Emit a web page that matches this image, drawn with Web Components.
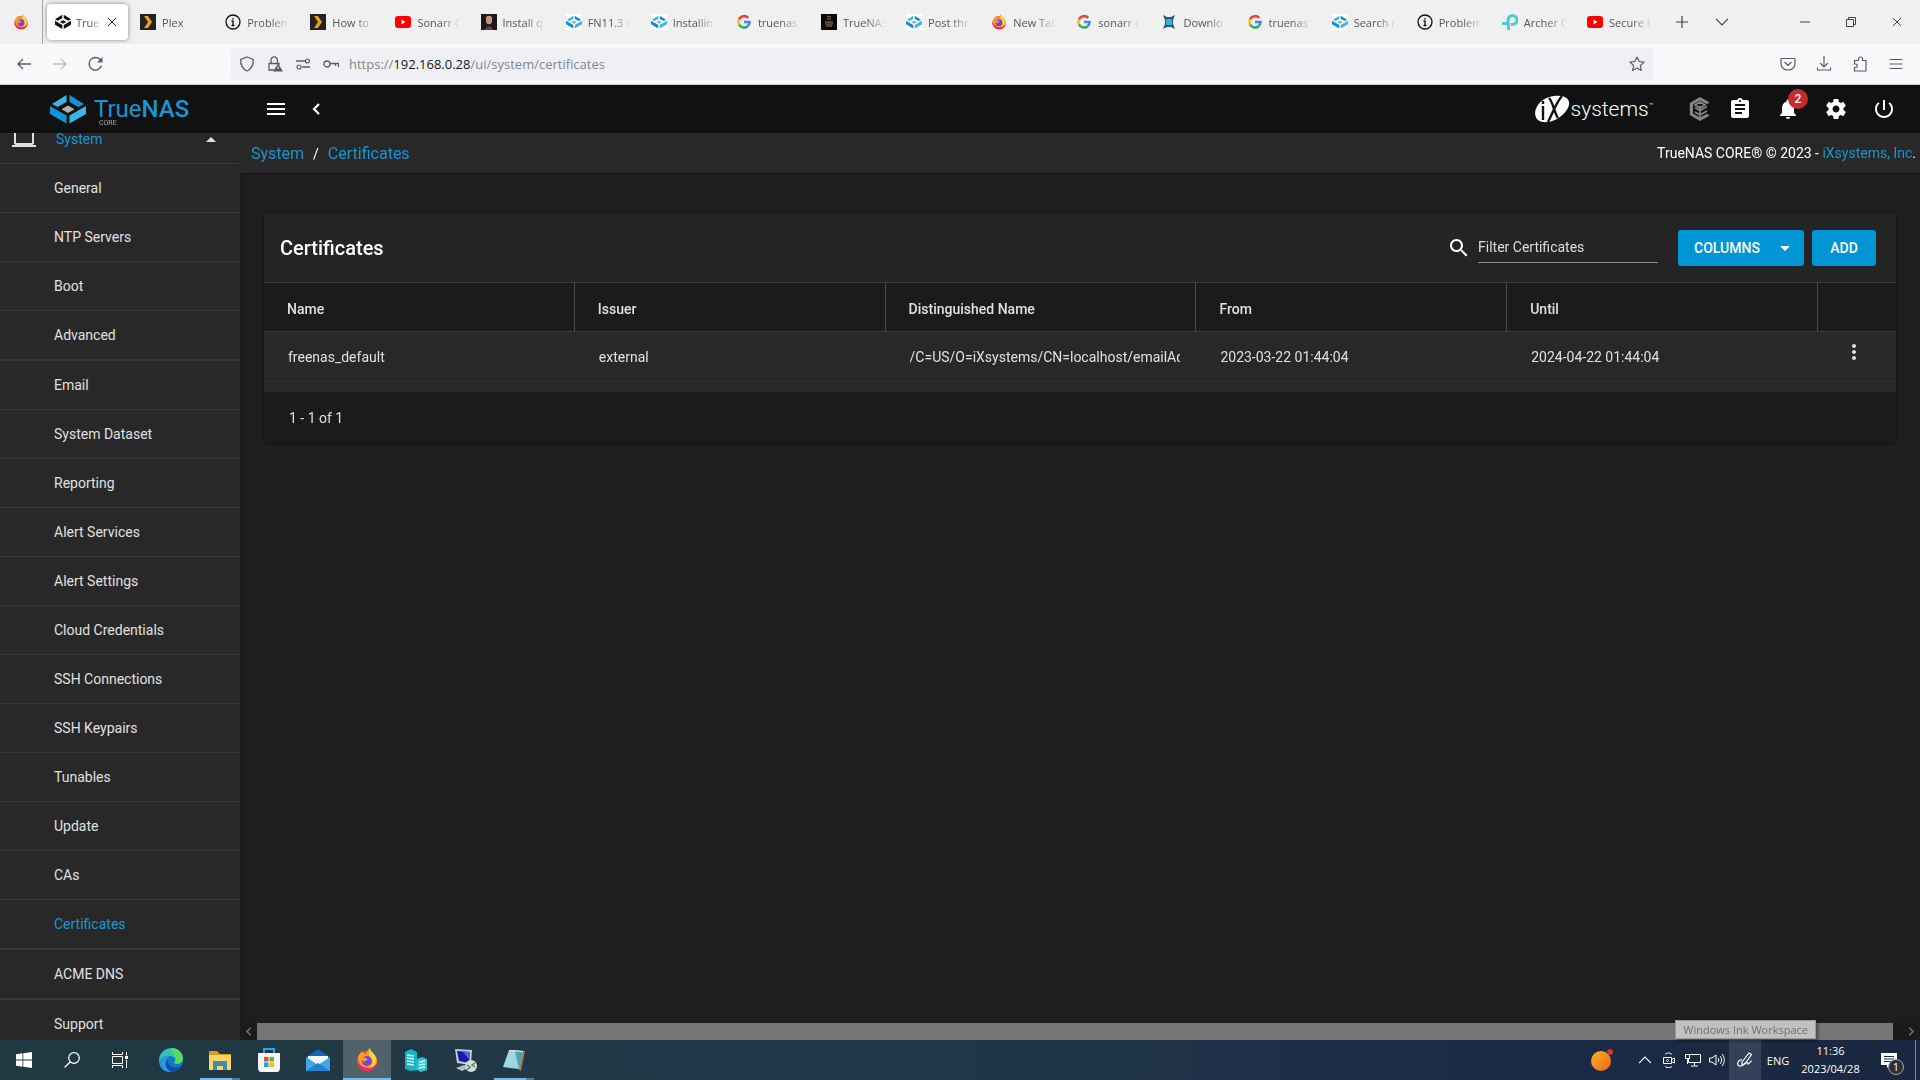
<!DOCTYPE html>
<html lang="en">
<head>
<meta charset="utf-8">
<title>TrueNAS - 192.168.0.28</title>
<style>
  html, body {
    height: 100%;
    margin: 0;
  }
  body {
    display: flex;
    flex-direction: column;
    overflow: hidden;
    background: #1e1e1e;
    font-family: Roboto, "Liberation Sans", sans-serif;
    font-size: 14px;
    --primary: #1a95d0;
    --ui-font: "Open Sans", "Noto Sans", sans-serif;
  }
  .layout {
    display: flex;
    flex: 1;
    min-height: 0;
  }
  main {
    display: flex;
    flex-direction: column;
    flex: 1;
    min-width: 0;
  }
  .content {
    flex: 1;
    padding: 40px 24px 0;
  }
</style>
</head>
<body>
<tab-strip></tab-strip>
<nav-toolbar></nav-toolbar>
<nas-header></nas-header>
<div class="layout">
  <nas-sidebar></nas-sidebar>
  <main>
    <nas-breadcrumb></nas-breadcrumb>
    <div class="content">
      <nas-card>
        <span slot="title">Certificates</span>
        <cert-tools slot="tools"></cert-tools>
        <cert-table></cert-table>
        <span slot="footer">1 - 1 of 1</span>
      </nas-card>
    </div>
    <h-scrollbar></h-scrollbar>
  </main>
</div>
<task-bar></task-bar>

<script>
// icons: [viewBox, markup]
const FOX = `<circle cx="12" cy="13" r="10" fill="#ff5a36"/><path d="M3 9C4 6 6 5 7 3c1 2 2 3 4 3 1-2 2-4 4-6 0 3 1 4 3 6 3 2 5 6 4 10-3 5-14 6-18-1z" fill="#ff9a1f"/><path d="M15 0c0 4 6 5 6 12 0 5-4 9-9 9 4-1 6-4 5-8-1-3-3-4-3-7 0-3 0-4 1-6z" fill="#ffd53c"/><path d="M2 12c0 7 5 11 10 11s10-3 10-9c-2 5-6 6-9 6-5 0-9-3-11-8z" fill="#f5276a"/><circle cx="12" cy="13" r="5" fill="#7543e0"/><path d="M7 10c2-1 5 0 6 2-2 0-3 1-3 2-2 0-3-2-3-4z" fill="#ff9a1f"/>`;
const hex = (a, b, c, d, mid) => `<path d="M16.500 0v7l-9 5L2 9z" fill="${a}"/><path d="M19.500 0v7l9 5L34 9z" fill="${b}"/><path d="M0 11l16.500 9.500v8L0 19z" fill="${c}"/><path d="M36 11l-16.500 9.500v8L36 19z" fill="${d}"/><path d="M18 10.500l6.500 3.800-6.500 3.800-6.500-3.800z" fill="${mid}"/>`;
const ICONS = {
  firefox: ['0 0 24 24', FOX],
  truenasDark: ['2 0 32 29', hex('#111', '#111', '#111', '#111', '#111')],
  truenas: ['0 -4 36 36', `<path d="M0-4h36v36H0z" fill="#fff"/>` + hex('#3ab5e8', '#0e8fcf', '#0e8fcf', '#3ab5e8', '#aaa')],
  truenasLogo: ['0 0 36 29', hex('#3ab5e8', '#0e95d8', '#0e95d8', '#3ab5e8', '#aeb0b2')],
  plex: ['0 0 16 16', '<path d="M0 0h16v16H0z" fill="#222"/><path d="M4 2h4l4 6-4 6H4l4-6z" fill="#e9a01c"/>'],
  info: ['0 0 16 16', '<circle cx="8" cy="8" r="7" fill="none" stroke="#111" stroke-width="1.300"/><path d="M8 4v1.500M6.500 7H8v4.500M6.500 11.500h3" fill="none" stroke="#111" stroke-width="1.300"/>'],
  youtube: ['0 0 16 16', '<rect y="2" width="16" height="12" rx="3" fill="#f00"/><path d="M6.500 5.500v5l4-2.500z" fill="#fff"/>'],
  photo: ['0 0 16 16', '<path d="M0 0h16v16H0z" fill="#1b1720"/><path d="M5 4c0-3 6-3 6 0v4c-1 3-5 3-6 0z" fill="#c98f77"/><path d="M4 16c1-5 7-5 8 0z" fill="#574149"/>'],
  google: ['0 0 16 16', '<g fill="none" stroke-width="2.500"><path d="M12.300 4A5.600 5.600 0 0 0 3 5.500" stroke="#ea4335"/><path d="M3 5.500a5.600 5.600 0 0 0 0 5" stroke="#fbbc05"/><path d="M3 10.500a5.600 5.600 0 0 0 8.700 1.700" stroke="#34a853"/><path d="M11.700 12.200A5.600 5.600 0 0 0 13.500 8H8" stroke="#4285f4"/></g>'],
  poster: ['0 0 16 16', '<path d="M0 0h16v16H0z" fill="#080808"/><path d="M6 3l2-1 2 1M6 5h4M4 8h8M4 10h8M5 12h6" stroke="#a58344" fill="none"/>'],
  sonarr: ['0 0 16 16', '<path d="M2 1l4 2h4l4-2-2 5v4l2 5-4-2H6l-4 2 2-5V6z" fill="#35506d"/><rect x="5" y="5" width="6" height="6" rx="1" fill="#27b6e6"/>'],
  tplink: ['0 0 16 16', '<path d="M6 10V6a4.500 4.500 0 1 1 4.500 4.500H9" fill="none" stroke="#4acbd6" stroke-width="3"/><path d="M0 8h5v3H0zM5 9h3v7H5z" fill="#4acbd6"/>'],
  close: ['0 0 12 12', '<path d="M2 2l8 8M10 2l-8 8" fill="none" stroke="currentColor"/>'],
  plus: ['0 0 12 12', '<path d="M6 0v12M0 6h12" fill="none" stroke="currentColor" stroke-width="1.200"/>'],
  down: ['0 0 12 12', '<path d="M0 3l6 6 6-6" fill="none" stroke="currentColor" stroke-width="1.200"/>'],
  minimize: ['0 0 12 12', '<path d="M1 6h10" stroke="currentColor"/>'],
  restore: ['0 0 12 12', '<path d="M1.500 3.500h7v7h-7zM3.500 3V1.500h7v7H9" fill="none" stroke="currentColor"/>'],
  back: ['0 0 16 16', '<path d="M15 8H2M7 3L2 8l5 5" fill="none" stroke="currentColor" stroke-width="1.300"/>'],
  forward: ['0 0 16 16', '<path d="M1 8h13M9 3l5 5-5 5" fill="none" stroke="currentColor" stroke-width="1.300"/>'],
  reload: ['0 0 16 16', '<path d="M13.500 9.500A6.300 6.300 0 1 1 12.500 4" fill="none" stroke="currentColor" stroke-width="1.400"/><path d="M14.500 1v5.500H9z" fill="currentColor"/>'],
  shield: ['0 0 16 16', '<path d="M8 1l6.300 2.500C14.500 9 12.500 13 8 15 3.500 13 1.500 9 1.700 3.500z" fill="none" stroke="currentColor" stroke-width="1.300"/>'],
  lock: ['0 0 16 16', '<path d="M7 14H2V7.500h10V9M4 7.500V4a3.200 3.200 0 0 1 6.400 0v3.500" fill="none" stroke="currentColor" stroke-width="1.300"/><path d="M11 7.500l5 8H6z" fill="currentColor"/><path d="M11 10.500V13" stroke="#f0f0f4"/>'],
  perms: ['0 0 16 16', '<path d="M1 5h9M7 11h8" stroke="currentColor" stroke-width="1.300"/><circle cx="12.500" cy="5" r="2" fill="none" stroke="currentColor" stroke-width="1.200"/><circle cx="4" cy="11" r="2" fill="none" stroke="currentColor" stroke-width="1.200"/>'],
  key: ['0 0 16 16', '<circle cx="4" cy="8" r="3" fill="none" stroke="currentColor" stroke-width="1.300"/><path d="M7 7.500h8.500V11M12.500 7.500V10" fill="none" stroke="currentColor" stroke-width="1.300"/>'],
  star: ['0 0 16 16', '<path d="M8 1l2.100 4.500 4.900.600-3.600 3.400.900 5L8 12.100l-4.300 2.400.900-5L1 6.100l4.900-.600z" fill="none" stroke="currentColor" stroke-width="1.200" stroke-linejoin="round"/>'],
  pocket: ['0 0 16 16', '<path d="M2 2.500h12c.600 0 1 .400 1 1V8A7 6 0 0 1 1 8V3.500c0-.600.400-1 1-1z" fill="none" stroke="currentColor" stroke-width="1.200"/><path d="M4.500 6L8 9.300 11.500 6" fill="none" stroke="currentColor" stroke-width="1.300"/>'],
  download: ['0 0 16 16', '<path d="M8 0v11M4 7l4 4 4-4M1.500 11.500V14h13v-2.500" fill="none" stroke="currentColor" stroke-width="1.200"/>'],
  puzzle: ['0 0 16 16', '<path d="M2.500 8V4.500h4V3a2 2 0 0 1 4 0v1.500h3.500v10.500H2.500v-3.500H4a1.800 1.800 0 0 0 0-3.500z" fill="none" stroke="currentColor" stroke-width="1.200"/>'],
  lines: ['0 0 16 16', '<path d="M1.500 3.500h13M1.500 8h13M1.500 12.500h13" stroke="currentColor" stroke-width="1.200"/>'],
  menu: ['0 0 24 24', '<path d="M3 18h18v-2H3v2zm0-5h18v-2H3v2zm0-7v2h18V6H3z" fill="currentColor"/>'],
  left: ['0 0 12 12', '<path d="M9 1L4 6l5 5" fill="none" stroke="currentColor" stroke-width="2.200"/>'],
  right: ['0 0 12 12', '<path d="M3 1l5 5-5 5" fill="none" stroke="currentColor" stroke-width="2.200"/>'],
  ixMark: ['0 0 36 28', '<path d="M3 24C-3 16 6 2 20 1c14-2 19 6 12 15-7 10-23 15-29 8z" fill="#fff"/><path d="M9 25V11M9 6v3M15 3c4 4 5 14 9 20M28 1C22 8 20 15 14 27" stroke="#111" stroke-width="2.400" fill="none"/>'],
  truecommand: ['0 0 24 24', '<path d="M12 0l9.500 5.200-2.500 2L12 3.500 5 7.500v9l7 4 7-3.700 2.500 2L12 24 1.800 18V6z" fill="#858585"/><path d="M12 5l5 3-5 3-5-3zM12 9v12M7 10.500l5 3 7-4M7 15l5 3 7-4" fill="none" stroke="#858585" stroke-width="1.700"/>'],
  clipboard: ['0 0 24 24', '<path d="M19 3h-4.180C14.400 1.840 13.300 1 12 1c-1.300 0-2.400.840-2.820 2H5c-1.100 0-2 .900-2 2v14c0 1.100.900 2 2 2h14c1.100 0 2-.900 2-2V5c0-1.100-.900-2-2-2zm-7 0c.550 0 1 .450 1 1s-.450 1-1 1-1-.450-1-1 .450-1 1-1zm2 14H7v-2h7v2zm3-4H7v-2h10v2zm0-4H7V7h10v2z" fill="currentColor"/>'],
  bell: ['0 0 24 24', '<path d="M12 22c1.100 0 2-.900 2-2h-4c0 1.100.890 2 2 2zm6-6v-5c0-3.070-1.640-5.640-4.500-6.320V4c0-.830-.670-1.500-1.500-1.500s-1.500.670-1.500 1.500v.680C7.630 5.360 6 7.920 6 11v5l-2 2v1h16v-1l-2-2z" fill="currentColor"/>'],
  gear: ['0 0 24 24', '<path d="M19.430 12.980c.040-.320.070-.640.070-.980s-.030-.660-.070-.980l2.110-1.650c.190-.150.240-.420.120-.640l-2-3.460c-.120-.220-.390-.300-.610-.220l-2.490 1c-.520-.400-1.080-.730-1.690-.980l-.380-2.650C14.460 2.180 14.250 2 14 2h-4c-.250 0-.460.180-.490.420l-.380 2.650c-.610.250-1.170.590-1.690.980l-2.490-1c-.230-.090-.490 0-.610.220l-2 3.460c-.130.220-.070.490.120.640l2.110 1.650c-.040.320-.070.650-.070.980s.030.660.070.980l-2.110 1.650c-.190.150-.240.420-.120.640l2 3.460c.120.220.390.300.610.220l2.490-1c.520.400 1.080.730 1.690.980l.380 2.650c.030.240.240.420.490.420h4c.250 0 .460-.180.490-.420l.380-2.650c.610-.250 1.170-.590 1.690-.980l2.490 1c.230.090.490 0 .610-.220l2-3.460c.120-.220.070-.490-.120-.640l-2.110-1.650zM12 15.500c-1.930 0-3.500-1.570-3.500-3.500s1.570-3.500 3.500-3.500 3.500 1.570 3.500 3.500-1.570 3.500-3.500 3.500z" fill="currentColor"/>'],
  power: ['0 0 24 24', '<path d="M13 3h-2v10h2V3zm4.830 2.170l-1.420 1.420C17.990 7.860 19 9.810 19 12c0 3.870-3.130 7-7 7s-7-3.130-7-7c0-2.190 1.010-4.140 2.580-5.420L6.170 5.170C4.230 6.820 3 9.260 3 12c0 4.970 4.030 9 9 9s9-4.030 9-9c0-2.740-1.230-5.180-3.170-6.830z" fill="currentColor"/>'],
  laptop: ['0 0 24 24', '<path d="M20 18c1.100 0 1.990-.900 1.990-2L22 6c0-1.100-.900-2-2-2H4c-1.100 0-2 .900-2 2v10c0 1.100.900 2 2 2H0v2h24v-2h-4zM4 6h16v10H4V6z" fill="currentColor"/>'],
  caretUp: ['0 0 10 10', '<path d="M0 8l5-5 5 5z" fill="currentColor"/>'],
  caretDown: ['0 0 10 10', '<path d="M0 3l5 5 5-5z" fill="currentColor"/>'],
  search: ['0 0 24 24', '<path d="M15.500 14h-.790l-.280-.270C15.410 12.590 16 11.110 16 9.500 16 5.910 13.090 3 9.500 3S3 5.910 3 9.500 5.910 16 9.500 16c1.610 0 3.090-.590 4.230-1.570l.270.280v.790l5 4.990L20.490 19l-4.990-5zm-6 0C7.010 14 5 11.990 5 9.500S7.010 5 9.500 5 14 7.010 14 9.500 11.990 14 9.500 14z" fill="currentColor"/>'],
  more: ['0 0 24 24', '<path d="M12 8c1.100 0 2-.900 2-2s-.900-2-2-2-2 .900-2 2 .900 2 2 2zm0 2c-1.100 0-2 .900-2 2s.900 2 2 2 2-.900 2-2-.900-2-2-2zm0 6c-1.100 0-2 .900-2 2s.900 2 2 2 2-.900 2-2-.900-2-2-2z" fill="currentColor"/>'],
  windows: ['0 0 16 16', '<path d="M0 2.200L6.500 1.300V7.600H0zM7.300 1.200L16 0v7.600H7.300zM0 8.400h6.500v6.300L0 13.800zM7.300 8.400H16V16l-8.700-1.200z" fill="#fff"/>'],
  lens: ['0 0 16 16', '<circle cx="10" cy="6" r="5.300" fill="none" stroke="#fff" stroke-width="1.200"/><path d="M6.300 9.800L.500 15.500" stroke="#fff" stroke-width="1.300"/>'],
  taskview: ['0 0 16 16', '<path d="M.500 0v2.500h10V0M.500 16v-2.500h10V16M.500 4.500h10v7H.500zM14.500 0v3.500M14.500 8v8" fill="none" stroke="#fff"/><path d="M13 4h3v3h-3z" fill="#fff"/>'],
  edge: ['0 0 24 24', '<circle cx="12" cy="12" r="12" fill="#1478c8"/><path d="M1 8C5-2 22-3 24 10c0 5-5 7-9 5 3-3 1-7-4-7C6 8 2 11 0 14c0-2 0-4 1-6z" fill="#36c5a4"/><path d="M12 0c7 0 12 5 12 10s-5 7-9 5c2-2 2-4 1-6z" fill="#5bd866"/><path d="M11 8c-5 2-6 11 2 16C5 25 0 19 0 13c2-4 6-6 11-5z" fill="#2596e0"/><path d="M9 11c-2 7 6 11 13 7-2 4-6 6-9 6-7-3-8-9-4-13z" fill="#0d4f9e"/>'],
  explorer: ['0 0 24 24', '<path d="M1 3h8l3 3h11v3H1z" fill="#d9981e"/><path d="M1 7h22v15H1z" fill="#fcd462"/><path d="M5 13h14v9h-4v-4H9v4H5z" fill="#3f8ab8"/>'],
  store: ['0 0 24 24', '<path d="M7 6V1h10v5" fill="none" stroke="#2fa4e7" stroke-width="2"/><path d="M1 5h22v15c0 2-1 4-3 4H4c-2 0-3-2-3-4z" fill="#f2f4f6"/><path d="M7 9h4.500v4.500H7z" fill="#e8502a"/><path d="M12.500 9H17v4.500h-4.500z" fill="#6cb52d"/><path d="M7 14.500h4.500V19H7z" fill="#1fa0e0"/><path d="M12.500 14.500H17V19h-4.500z" fill="#f6b81d"/>'],
  mail: ['0 0 24 24', '<path d="M0 9l12-8 12 8v14H0z" fill="#1565b5"/><path d="M2 8h20v9H2z" fill="#f4f8fc"/><path d="M0 9l12 8 12-8v14H0z" fill="#3ba7e8"/><path d="M0 23l12-8 12 8z" fill="#1c84d2"/>'],
  servers: ['0 0 24 24', '<path d="M1 4l6-3 6 3v18l-6 1-6-2z" fill="#16b5c6"/><path d="M13 11l5-2 5 2v11l-6 2-4-2z" fill="#29c6d5"/><path d="M3 7l7 1M3 10l7 1M3 13l7 1M3 16l7 1M15 14l6-1M15 17l6-1M15 20l6-1" stroke="#d5fbff" stroke-width="1.300"/>'],
  rdp: ['0 0 24 24', '<path d="M2 1l17 1-1 15-14-2z" fill="#c5ccd6"/><path d="M4 3l13 1-1 11L6 13z" fill="#101dad"/><path d="M9 3l8 1-1 7z" fill="#4e69e8"/><path d="M3 20l8-3 4 3-6 3z" fill="#b9bec6"/><circle cx="18" cy="18" r="6" fill="#d7dcda"/><path d="M14 17l3 2-3 3M22 15l-3 2 3 2" stroke="#2d9a42" stroke-width="1.500" fill="none"/>'],
  notes: ['0 0 24 24', '<path d="M7 2l16 1-4 20-3-2z" fill="#9a7d4f"/><path d="M7 2l14 1-4 18L1 19z" fill="#9ed6e2"/><path d="M13 3l8 0-4 18z" fill="#4f9fb3"/><path d="M7 2l14 1v1L7 3z" fill="#eaf6f8"/>'],
  orb: ['0 0 24 24', '<defs><linearGradient id="o" x1="0" y1="0" x2="1" y2="1"><stop offset="0" stop-color="#f9b52b"/><stop offset="1" stop-color="#ee6512"/></linearGradient></defs><circle cx="11" cy="13" r="10" fill="url(#o)"/><circle cx="20" cy="4" r="3" fill="#d13a26"/>'],
  up: ['0 0 12 12', '<path d="M0 9l6-6 6 6" fill="none" stroke="currentColor" stroke-width="1.200"/>'],
  camera: ['0 0 16 16', '<path d="M2.500 5.500h8v6h-8zM10.500 7.500l3-1.500v5l-3-1.500M4 2.500c2-2 5-2 7 0M4 14.500c2 1.500 5 1.500 7 0" fill="none" stroke="#fff"/><circle cx="6.500" cy="8.500" r="1" fill="none" stroke="#fff" stroke-width=".800"/>'],
  network: ['0 0 16 16', '<path d="M5 2.500h10.500v8H3.500V7M9.500 10.500v3M6 14h7M.500 2.500h4v4h-4zM2.500 7v5" fill="none" stroke="#fff"/>'],
  speaker: ['0 0 16 16', '<path d="M.500 6v4h2.500l4 3V3L3 6zM9 6c1 1 1 3 0 4M11 4c2 2 2 6 0 8M13 2c3 3 3 9 0 12" fill="none" stroke="#fff"/>'],
  ink: ['0 0 16 16', '<path d="M5 10L12 1l2.500 1.500L8 12l-3 1zM5 8c-3-1-5 3-4 5s5 1 6-1 4-2 4 0c2 0 1-3 4-3" fill="none" stroke="#fff" stroke-width="1.200"/>'],
  note: ['0 0 16 16', '<path d="M0 1h16v12H9l-3 3v-3H0z" fill="#fff"/><path d="M3 4.500h10M3 7h10M3 9.500h7" stroke="#1b2841"/>']
};

// shared helper, shadow root + first render
class BaseElement extends HTMLElement {
  constructor() {
    super();
    this.attachShadow({ mode: 'open' });
  }
  connectedCallback() {
    this.shadowRoot.innerHTML = this.render();
    if (this.ready) this.ready();
  }
}

class UiIcon extends BaseElement {
  render() {
    const [box, body] = ICONS[this.getAttribute('name')];
    return `
      <style>
        :host { display: inline-flex; flex: none; width: 16px; height: 16px; }
        svg { display: block; width: 100%; height: 100%; }
      </style>
      <svg viewBox="${box}" aria-hidden="true">${body}</svg>`;
  }
}
customElements.define('ui-icon', UiIcon);

class BrowserTab extends BaseElement {
  render() {
    const active = this.hasAttribute('active');
    return `
      <style>
        :host { display: flex; flex: 1 1 0; min-width: 0; padding: 4px 2px; box-sizing: border-box; }
        .tab {
          display: flex; align-items: center; gap: 6px; flex: 1; min-width: 0; padding: 0 8px;
          border-radius: 4px; color: #55555c; font-size: 11px;
        }
        :host([active]) .tab { gap: 5px; padding-right: 10px; background: #fff; box-shadow: 0 0 4px rgba(0,0,0,.45); }
        .label {
          flex: 1; overflow: hidden; white-space: nowrap;
          mask-image: linear-gradient(to left, transparent, #000 20px);
        }
        :host([active]) .label { mask-image: linear-gradient(to left, transparent, #000 10px); }
        button { display: flex; border: 0; padding: 0; background: none; color: #222; }
        button ui-icon { width: 12px; height: 12px; }
      </style>
      <div class="tab">
        <ui-icon name="${this.getAttribute('icon')}"></ui-icon>
        <span class="label"><slot></slot></span>
        ${active ? '<button aria-label="Close tab"><ui-icon name="close"></ui-icon></button>' : ''}
      </div>`;
  }
}
customElements.define('browser-tab', BrowserTab);

class TabStrip extends BaseElement {
  render() {
    const tabs = [
      ['truenasDark', 'TrueNAS'], ['plex', 'Plex'], ['info', 'Problem'], ['plex', 'How to'],
      ['youtube', 'Sonarr C'], ['photo', 'Install q'], ['truenas', 'FN11.3 i'], ['truenas', 'Installin'],
      ['google', 'truenas'], ['poster', 'TrueNAS'], ['truenas', 'Post thr'], ['firefox', 'New Tab'],
      ['google', 'sonarr d'], ['sonarr', 'Downlo'], ['google', 'truenas'], ['truenas', 'Search r'],
      ['info', 'Problem'], ['tplink', 'Archer C'], ['youtube', 'Secure H']
    ];
    return `
      <style>
        :host { display: flex; height: 44px; background: #f0f0f0; font-family: var(--ui-font); color: #444; }
        .pinned { display: flex; align-items: center; justify-content: center; width: 42px; border-right: 1px solid #aaa; margin-right: 2px; }
        .tabs { display: flex; flex: 1; min-width: 0; }
        button { display: flex; align-items: center; justify-content: center; border: 0; padding: 0; background: none; color: inherit; width: 40px; }
        .window { display: flex; margin-left: 40px; }
        .window button { width: 46px; }
        button ui-icon { width: 12px; height: 12px; }
      </style>
      <div class="pinned"><ui-icon name="firefox"></ui-icon></div>
      <div class="tabs">
        ${tabs.map(([icon, label], i) => `<browser-tab icon="${icon}" ${i === 0 ? 'active' : ''}>${label}</browser-tab>`).join('')}
      </div>
      <button aria-label="New tab"><ui-icon name="plus"></ui-icon></button>
      <button aria-label="List all tabs"><ui-icon name="down"></ui-icon></button>
      <div class="window">
        <button aria-label="Minimize"><ui-icon name="minimize"></ui-icon></button>
        <button aria-label="Restore"><ui-icon name="restore"></ui-icon></button>
        <button aria-label="Close"><ui-icon name="close"></ui-icon></button>
      </div>`;
  }
}
customElements.define('tab-strip', TabStrip);

class NavToolbar extends BaseElement {
  render() {
    return `
      <style>
        :host {
          display: flex; align-items: center; height: 40px; padding: 0 6px; background: #f9f9fb;
          border-bottom: 1px solid #ccc; font-family: var(--ui-font); font-size: 13px; color: #5b5b66;
        }
        button { display: flex; align-items: center; justify-content: center; width: 36px; height: 32px; border: 0; padding: 0; background: none; color: inherit; }
        button:disabled { color: #bbbbc0; }
        .url { display: flex; align-items: center; gap: 10px; flex: 1; margin: 0 117px; height: 32px; padding: 0 8px; background: #f0f0f4; border-radius: 4px; }
        .icons { display: flex; gap: 12px; }
        .address { flex: 1; color: #85858c; white-space: nowrap; }
        b { font-weight: 400; color: #15141a; }
      </style>
      <button aria-label="Back"><ui-icon name="back"></ui-icon></button>
      <button aria-label="Forward" disabled><ui-icon name="forward"></ui-icon></button>
      <button aria-label="Reload"><ui-icon name="reload"></ui-icon></button>
      <div class="url">
        <div class="icons">
          <ui-icon name="shield"></ui-icon>
          <ui-icon name="lock"></ui-icon>
          <ui-icon name="perms"></ui-icon>
          <ui-icon name="key"></ui-icon>
        </div>
        <span class="address" role="textbox" aria-label="Address">https://<b>192.168.0.28</b>/ui/system/certificates</span>
        <ui-icon name="star"></ui-icon>
      </div>
      <button aria-label="Pocket"><ui-icon name="pocket"></ui-icon></button>
      <button aria-label="Downloads"><ui-icon name="download"></ui-icon></button>
      <button aria-label="Extensions"><ui-icon name="puzzle"></ui-icon></button>
      <button aria-label="Menu"><ui-icon name="lines"></ui-icon></button>`;
  }
}
customElements.define('nav-toolbar', NavToolbar);

class NasHeader extends BaseElement {
  render() {
    return `
      <style>
        :host { display: flex; align-items: center; height: 48px; background: #111; color: #fff; }
        .brand { display: flex; align-items: center; gap: 8px; width: 190px; padding-left: 50px; color: var(--primary); text-decoration: none; }
        .brand ui-icon { width: 36px; height: 29px; }
        .name { position: relative; font-size: 24px; line-height: 32px; }
        .name b { font-weight: 500; }
        .core { position: absolute; left: 5px; bottom: -2px; font-size: 7px; line-height: 8px; color: #aaa; }
        button { display: flex; align-items: center; justify-content: center; position: relative; width: 48px; height: 48px; border: 0; padding: 0; background: none; color: inherit; }
        button ui-icon { width: 24px; height: 24px; }
        .toggle { margin-left: 12px; }
        .back { width: 32px; }
        .back ui-icon { width: 12px; height: 12px; }
        .ix { display: flex; align-items: center; gap: 1px; margin-left: auto; margin-right: 31px; color: #fff; text-decoration: none; font-size: 21px; font-weight: 300; }
        .ix ui-icon { width: 36px; height: 28px; }
        .ix sup { font-size: 7px; line-height: 8px; }
        .small { width: 32px; }
        .last { margin-right: 12px; }
        .badge { position: absolute; top: 4px; left: 24px; width: 20px; height: 20px; border-radius: 10px; background: #c92a2e; font: 500 12px/20px Roboto, sans-serif; text-align: center; }
      </style>
      <a class="brand" href="#">
        <ui-icon name="truenasLogo"></ui-icon>
        <span class="name">True<b>NAS</b><span class="core">CORE</span></span>
      </a>
      <button class="toggle" aria-label="Toggle menu"><ui-icon name="menu"></ui-icon></button>
      <button class="back" aria-label="Collapse"><ui-icon name="left"></ui-icon></button>
      <a class="ix" href="#"><ui-icon name="ixMark"></ui-icon><span>systems<sup>™</sup></span></a>
      <button class="small" aria-label="TrueCommand"><ui-icon name="truecommand"></ui-icon></button>
      <button aria-label="Task manager"><ui-icon name="clipboard"></ui-icon></button>
      <button aria-label="Alerts"><ui-icon name="bell"></ui-icon><span class="badge">2</span></button>
      <button aria-label="Settings"><ui-icon name="gear"></ui-icon></button>
      <button class="last" aria-label="Power"><ui-icon name="power"></ui-icon></button>`;
  }
}
customElements.define('nas-header', NasHeader);

class NasBreadcrumb extends BaseElement {
  render() {
    return `
      <style>
        :host { display: flex; align-items: center; justify-content: space-between; height: 40px; padding: 0 4px 0 11px; background: #282828; color: #fff; box-shadow: 0 1px 1px rgba(0,0,0,.3); }
        a { color: var(--primary); text-decoration: none; }
        nav { display: flex; align-items: baseline; gap: 9px; font-size: 16px; }
        nav span { font-size: 14px; }
      </style>
      <nav><a href="#">System</a><span>/</span><a href="#">Certificates</a></nav>
      <div>TrueNAS CORE® © 2023 - <a href="#">iXsystems, Inc</a>.</div>`;
  }
}
customElements.define('nas-breadcrumb', NasBreadcrumb);

class NasCard extends BaseElement {
  render() {
    return `
      <style>
        :host { display: block; border-radius: 4px; background: #242424; color: #e0e0e0; box-shadow: 0 1px 3px rgba(0,0,0,.4); overflow: hidden; }
        header { display: flex; align-items: center; justify-content: space-between; height: 69px; padding: 0 20px 0 16px; }
        h2 { margin: 0; font-size: 20px; font-weight: 500; color: #fff; }
        footer { height: 51px; padding-left: 25px; line-height: 52px; background: #1b1b1b; }
      </style>
      <header><h2><slot name="title"></slot></h2><slot name="tools"></slot></header>
      <slot></slot>
      <footer><slot name="footer"></slot></footer>`;
  }
}
customElements.define('nas-card', NasCard);

class CertTools extends BaseElement {
  render() {
    return `
      <style>
        :host { display: flex; align-items: center; }
        label { display: flex; margin-right: 7px; color: #fff; }
        label ui-icon { width: 24px; height: 24px; }
        input { width: 180px; height: 30px; box-sizing: border-box; margin-right: 20px; padding: 0; border: 0; border-bottom: 1px solid #888; background: none; color: #ddd; font: 14px Roboto, sans-serif; outline: 0; }
        input::placeholder { color: #ddd; opacity: 1; }
        button { display: flex; align-items: center; justify-content: center; gap: 20px; height: 36px; padding: 0; border: 0; border-radius: 3px; background: #0095d5; color: #fff; font: 500 14px Roboto, sans-serif; }
        .columns { width: 126px; margin-right: 8px; padding-left: 2px; }
        .columns ui-icon { width: 10px; height: 10px; }
        .add { width: 64px; }
      </style>
      <label for="filter"><ui-icon name="search"></ui-icon></label>
      <input id="filter" type="text" aria-label="Filter Certificates" placeholder="Filter Certificates">
      <button class="columns">COLUMNS<ui-icon name="caretDown"></ui-icon></button>
      <button class="add">ADD</button>`;
  }
}
customElements.define('cert-tools', CertTools);

class CertTable extends BaseElement {
  render() {
    const columns = ['Name', 'Issuer', 'Distinguished Name', 'From', 'Until'];
    const row = ['freenas_default', 'external', '/C=US/O=iXsystems/CN=localhost/emailAddress', '2023-03-22 01:44:04', '2024-04-22 01:44:04'];
    return `
      <style>
        :host { display: block; padding-bottom: 10px; background: #282828; }
        table { width: 100%; border-collapse: separate; border-spacing: 0; table-layout: fixed; }
        th, td { box-sizing: border-box; padding: 0 16px 0 23px; text-align: left; white-space: nowrap; overflow: hidden; }
        th { height: 50px; padding-top: 4px; background: #1b1b1b; border: solid #3a3a3a; border-width: 1px 0; font-weight: 500; }
        th:not(:last-child) { border-right: 1px solid #4a4a4a; }
        td { height: 50px; padding-left: 24px; border-bottom: 1px solid #303030; }
        .text { display: block; overflow: hidden; }
        .actions { width: 78px; padding: 0 30px 0 0; }
        td.actions { padding-bottom: 10px; }
        button { display: flex; margin-left: auto; border: 0; padding: 0; background: none; color: #e0e0e0; }
        button ui-icon { width: 24px; height: 24px; }
      </style>
      <table>
        <thead><tr>${columns.map(c => `<th>${c}</th>`).join('')}<th class="actions"></th></tr></thead>
        <tbody><tr>
          ${row.map(c => `<td><span class="text">${c}</span></td>`).join('')}
          <td class="actions"><button aria-label="Options"><ui-icon name="more"></ui-icon></button></td>
        </tr></tbody>
      </table>`;
  }
}
customElements.define('cert-table', CertTable);

class HScrollbar extends BaseElement {
  render() {
    return `
      <style>
        :host { display: flex; height: 17px; background: #1a1a1a; color: #707070; }
        button { display: flex; align-items: center; justify-content: center; width: 17px; border: 0; padding: 0; background: none; color: inherit; }
        button ui-icon { width: 9px; height: 9px; }
        .thumb { flex: 1; margin-right: 10px; background: #757577; }
      </style>
      <button aria-label="Scroll left"><ui-icon name="left"></ui-icon></button>
      <div class="thumb"></div>
      <button aria-label="Scroll right"><ui-icon name="right"></ui-icon></button>`;
  }
}
customElements.define('h-scrollbar', HScrollbar);

class TaskBar extends BaseElement {
  render() {
    const apps = [['edge', ''], ['explorer', 'open many'], ['store', ''], ['mail', ''], ['firefox', 'open active'],
      ['servers', ''], ['rdp', ''], ['notes', 'open many']];
    return `
      <style>
        :host { display: flex; flex: none; position: relative; height: 40px; background: linear-gradient(to right, #20383f, #21384a 45%, #1b2a45 80%, #1a2740); color: #fff; font: 11px var(--ui-font); }
        button { display: flex; align-items: center; justify-content: center; border: 0; padding: 0; background: none; color: inherit; font: inherit; width: 48px; }
        .apps { display: flex; gap: 1px; margin-left: 3px; }
        .apps ui-icon { width: 24px; height: 24px; }
        .apps button { border-bottom: 2px solid transparent; border-top: 2px solid transparent; box-sizing: border-box; }
        .apps .many { border-image: linear-gradient(to right, transparent 4px, #76b9ed 4px, #76b9ed 36px, #4f7d9f 36px, #4f7d9f 44px, transparent 44px) 0 0 2 0; }
        .apps .active { background: #50636a; border-bottom-color: #76b9ed; }
        .tray { display: flex; align-items: stretch; margin-left: auto; }
        .tray button { width: 24px; }
        .tray .orb { width: 56px; padding-right: 7px; }
        .orb ui-icon { width: 24px; height: 24px; }
        .tray .up ui-icon { width: 12px; height: 12px; }
        .tray .ink { width: 32px; background: #35415a; }
        .tray .lang { width: 34px; }
        .tray .clock { flex-direction: column; width: 71px; margin-right: 4px; line-height: 18px; }
        .tray .note { position: relative; width: 46px; padding-right: 8px; border-right: 1px solid #7f8a9c; margin-right: 4px; }
        .count { position: absolute; left: 18px; top: 19px; width: 14px; height: 14px; border: 1px solid #aaa; border-radius: 8px; background: #2b3037; line-height: 14px; }
        .tip { position: absolute; right: 104px; bottom: 41px; padding: 0 7px; border: 1px solid #9a9a9a; background: #c1c1c1; color: #707070; line-height: 17px; box-shadow: 2px 2px 3px rgba(0,0,0,.4); }
      </style>
      <button aria-label="Start"><ui-icon name="windows"></ui-icon></button>
      <button aria-label="Search"><ui-icon name="lens"></ui-icon></button>
      <button aria-label="Task view"><ui-icon name="taskview"></ui-icon></button>
      <div class="apps">
        ${apps.map(([icon, cls]) => `<button class="${cls}" aria-label="${icon}"><ui-icon name="${icon}"></ui-icon></button>`).join('')}
      </div>
      <div class="tray">
        <button class="orb" aria-label="News"><ui-icon name="orb"></ui-icon></button>
        <button class="up" aria-label="Hidden icons"><ui-icon name="up"></ui-icon></button>
        <button aria-label="Meet now"><ui-icon name="camera"></ui-icon></button>
        <button aria-label="Network"><ui-icon name="network"></ui-icon></button>
        <button aria-label="Volume"><ui-icon name="speaker"></ui-icon></button>
        <button class="ink" aria-label="Ink"><ui-icon name="ink"></ui-icon></button>
        <button class="lang">ENG</button>
        <button class="clock"><span>11:36</span><span>2023/04/28</span></button>
        <button class="note" aria-label="Notifications"><ui-icon name="note"></ui-icon><span class="count">1</span></button>
      </div>
      <div class="tip" role="tooltip">Windows Ink Workspace</div>`;
  }
}
customElements.define('task-bar', TaskBar);

// defined last, its scroll position needs the final height of the layout
class NasSidebar extends BaseElement {
  render() {
    const items = [
      'General', 'NTP Servers', 'Boot', 'Advanced', 'Email', 'System Dataset', 'Reporting',
      'Alert Services', 'Alert Settings', 'Cloud Credentials', 'SSH Connections', 'SSH Keypairs',
      'Tunables', 'Update', 'CAs', 'Certificates', 'ACME DNS', 'Support'
    ];
    const thick = ['Advanced', 'Certificates', 'ACME DNS'];
    return `
      <style>
        :host { display: block; flex: none; width: 240px; background: #282828; overflow-y: auto; scrollbar-width: none; color: #e0e0e0; box-shadow: 0 0 4px rgba(0,0,0,.4); }
        a { display: flex; align-items: center; height: 48px; padding-left: 54px; border-bottom: 1px solid #383838; color: inherit; text-decoration: none; }
        a.thick { border-bottom-width: 2px; }
        a.current, a.parent { color: var(--primary); }
        a.parent { padding: 0 24px 0 12px; gap: 20px; }
        a.parent ui-icon { width: 24px; height: 24px; color: #e0e0e0; }
        a.parent .caret { width: 10px; height: 10px; margin-left: auto; }
      </style>
      <a class="parent" href="#"><ui-icon name="laptop"></ui-icon>System<ui-icon class="caret" name="caretUp"></ui-icon></a>
      ${items.map(item => `<a href="#" class="${thick.includes(item) ? 'thick' : ''} ${item === 'Certificates' ? 'current' : ''}">${item}</a>`).join('')}`;
  }
  ready() {
    this.scrollTop = 18;
  }
}
customElements.define('nas-sidebar', NasSidebar);
</script>
</body>
</html>
